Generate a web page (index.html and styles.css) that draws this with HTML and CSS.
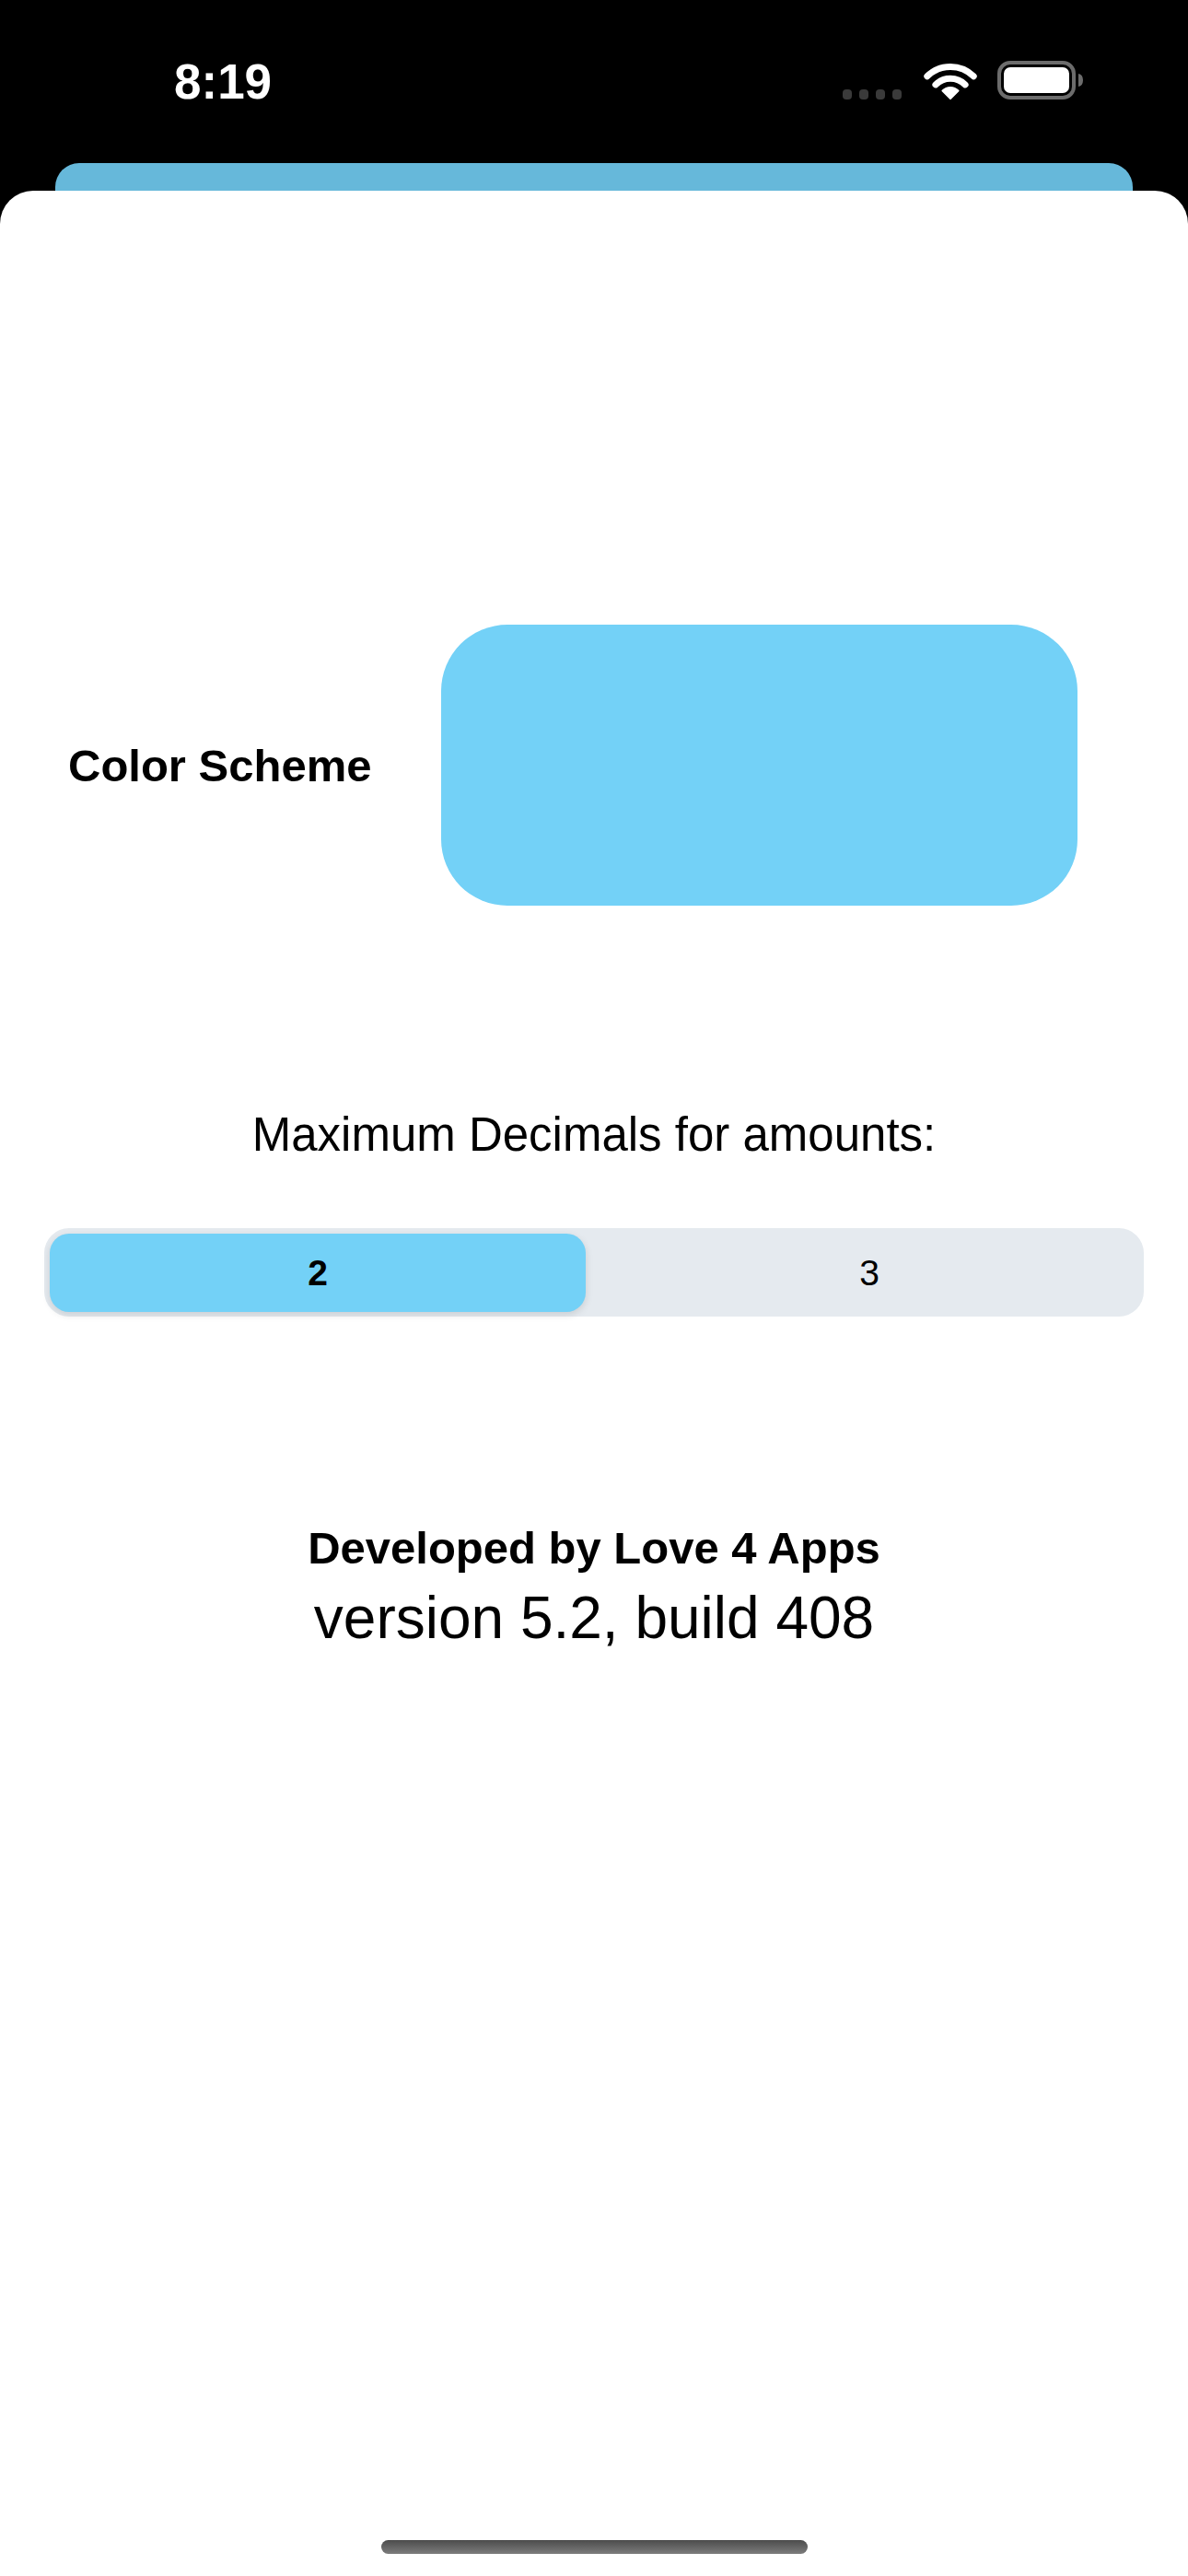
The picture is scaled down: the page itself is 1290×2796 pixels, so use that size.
FILE: index.html
```html
<!DOCTYPE html>
<html lang="en">

<head>
    <meta charset="UTF-8">
    <meta name="viewport" content="width=device-width, initial-scale=1.0">
    <title>Settings</title>
    <link rel="stylesheet" href="styles.css">
</head>

<body>

    <div class="phone">
        <div class="status-bar">
            <span class="clock">8:19</span>
            <div class="status-icons">
                <div class="signal">
                    <span></span><span></span><span></span><span></span>
                </div>
                <svg class="wifi" width="58" height="42" viewBox="0 0 58 42">
                    <path d="M3.8 16.8 A36 36 0 0 1 54.2 16.8" fill="none" stroke="#fff" stroke-width="7" stroke-linecap="round" />
                    <path d="M12.9 25.9 A23 23 0 0 1 45.1 25.9" fill="none" stroke="#fff" stroke-width="7" stroke-linecap="round" />
                    <path d="M29 41 L20.5 32.5 A12 12 0 0 1 37.5 32.5 Z" fill="#fff" stroke="#fff" stroke-width="2" stroke-linejoin="round" />
                </svg>
                <svg class="battery" width="94" height="42" viewBox="0 0 94 42">
                    <rect x="2" y="2" width="81" height="38" rx="12" fill="none" stroke="#6c6c6c" stroke-width="4" />
                    <rect x="7" y="7" width="71" height="28" rx="7" fill="#fff" />
                    <path d="M88 14 Q93 15 93 21 Q93 27 88 28 Z" fill="#6c6c6c" />
                </svg>
            </div>
        </div>

        <div class="card-behind"></div>

        <div class="sheet">
            <div class="scheme-row">
                <span class="row-label">Color Scheme</span>
                <div class="scheme-swatch"></div>
            </div>

            <p class="decimals-label">Maximum Decimals for amounts:</p>

            <div class="segmented">
                <div class="segment selected">2</div>
                <div class="segment">3</div>
            </div>

            <div class="about">
                <p class="developer">Developed by Love 4 Apps</p>
                <p class="version">version 5.2, build 408</p>
            </div>

            <div class="home-indicator"></div>
        </div>
    </div>

</body>

</html>
```

FILE: styles.css
```css
body {
    font-family: 'Liberation Sans', Arial, sans-serif;
    margin: 0;
    padding: 0;
    background-color: #000;
    color: #000;
}

.phone {
    width: 1290px;
    height: 2796px;
    display: flex;
    flex-direction: column;
    overflow: hidden;
}

/* status bar */
.status-bar {
    height: 177px;
    display: flex;
    align-items: center;
    justify-content: space-between;
    padding: 0 113px 4px 189px;
    box-sizing: border-box;
}

.clock {
    color: #fff;
    font-size: 53px;
    font-weight: bold;
    line-height: 60px;
    margin-top: 4px;
}

.status-icons {
    display: flex;
    align-items: flex-end;
}

.signal {
    display: flex;
    gap: 8px;
    margin-right: 24px;
}

.signal span {
    width: 10px;
    height: 11px;
    border-radius: 4px;
    background-color: #3a3a3a;
}

.wifi {
    display: block;
    margin-right: 22px;
}

.battery {
    display: block;
}

.card-behind {
    height: 30px;
    margin: 0 60px;
    background-color: #66b8da;
    border-radius: 26px 26px 0 0;
}

/* sheet */
.sheet {
    flex: 1;
    background-color: #fff;
    border-radius: 36px 36px 0 0;
    display: flex;
    flex-direction: column;
}

.scheme-row {
    display: flex;
    align-items: center;
    margin-top: 471px;
    padding: 0 120px 0 74px;
}

.row-label {
    font-size: 49px;
    font-weight: bold;
}

.scheme-swatch {
    width: 691px;
    height: 305px;
    margin-left: auto;
    background-color: #73d1f7;
    border-radius: 72px;
}

.decimals-label {
    margin: 219px 0 0;
    font-size: 51px;
    line-height: 60px;
    text-align: center;
}

.segmented {
    display: flex;
    margin: 71px 48px 0;
    height: 96px;
    padding: 6px 6px 5px;
    box-sizing: border-box;
    background-color: #e5eaef;
    border-radius: 27px;
}

.segment {
    flex: 1;
    display: flex;
    align-items: center;
    justify-content: center;
    font-size: 39px;
    border-radius: 21px;
    padding-left: 16px;
}

.segment.selected {
    flex: 0 0 582px;
    padding-left: 0;
    background-color: #73d1f7;
    font-weight: bold;
    box-shadow: 0 3px 8px rgba(0, 0, 0, 0.12);
}

.about {
    margin-top: 222px;
    text-align: center;
}

.developer {
    margin: 0;
    font-size: 49px;
    font-weight: bold;
    line-height: 58px;
}

.version {
    margin: 11px 0 0;
    font-size: 64px;
    line-height: 72px;
}

.home-indicator {
    width: 463px;
    height: 15px;
    margin: auto auto 24px;
    border-radius: 8px;
    background: linear-gradient(#4c4c4c, #7c7c7c);
}
```
